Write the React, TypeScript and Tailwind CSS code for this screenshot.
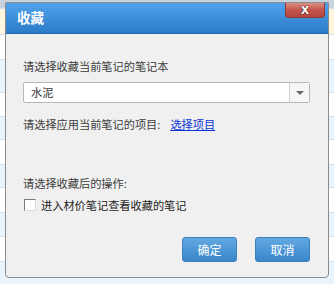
import React from "react";

const rows = [
  { h: 9, bg: "bg-[#c9d3de]" },
  { h: 26, bg: "bg-[#fdf6dc]" },
  { h: 25, bg: "bg-white" },
  { h: 33, bg: "bg-[#eaf4fc]" },
  { h: 24, bg: "bg-white" },
  { h: 23, bg: "bg-[#eaf4fc]" },
  { h: 25, bg: "bg-white" },
  { h: 23, bg: "bg-[#eaf4fc]" },
  { h: 25, bg: "bg-white" },
  { h: 24, bg: "bg-[#eaf4fc]" },
  { h: 25, bg: "bg-white" },
  { h: 30, bg: "bg-[#eaf4fc]" },
];

export default function App() {
  const font = { fontFamily: '"Noto Sans CJK SC", "Noto Sans", sans-serif' };
  return (
    <div className="relative w-[334px] h-[284px] overflow-hidden bg-white" style={font}>
      <div className="flex flex-col">
        {rows.map((r, i) => (
          <div
            key={i}
            className={`${r.bg} border-b border-[#d5e3ef]`}
            style={{ height: r.h }}
          />
        ))}
      </div>

      <div className="absolute left-[5px] top-[2px] w-[324px] h-[276px] border border-[#8c8c8c] rounded-b-[4px] bg-[#f0f0f0] flex flex-col overflow-hidden">
        <div className="relative h-[31px] shrink-0 flex items-center pl-[11px] bg-gradient-to-b from-[#50a3ec] to-[#2b7bc6] border-b border-[#1f68ad]">
          <span className="text-white font-bold text-[13.5px] leading-none">收藏</span>
          <div className="absolute right-[3px] top-[-1px] w-[40px] h-[16px] rounded-b-[3px] border border-[#8d3b33] bg-gradient-to-b from-[#dc9087] via-[#c3554d] to-[#b5463f] flex items-center justify-center">
            <span
              className="text-white font-bold text-[11px] leading-none"
              style={{ fontFamily: '"DejaVu Sans", sans-serif', textShadow: "0 0 1px #4a1612, 0 0 1px #4a1612, 0 0 1px #4a1612" }}
            >
              X
            </span>
          </div>
        </div>

        <div className="flex flex-col pl-[17px] pr-[18px] pt-[24px] text-[11.2px] text-[#3c3c3c]">
          <div className="h-[16px] leading-[16px]">请选择收藏当前笔记的笔记本</div>
          <div className="mt-[8px] h-[21px] flex bg-white border border-[#b8b8b8] rounded-[2px]">
            <div className="flex-1 pl-[7px] flex items-center text-[#333]">水泥</div>
            <div className="w-[20px] border-l border-[#cfcfcf] bg-[#f6f6f6] flex items-center justify-center">
              <div className="w-0 h-0 border-l-[4px] border-r-[4px] border-t-[4px] border-l-transparent border-r-transparent border-t-[#666]" />
            </div>
          </div>
          <div className="mt-[13px] h-[16px] leading-[16px] flex">
            <span>请选择应用当前笔记的项目:</span>
            <span className="ml-[10px] text-[#0a33d8] underline">选择项目</span>
          </div>
          <div className="mt-[43px] h-[16px] leading-[16px]">请选择收藏后的操作:</div>
          <div className="mt-[6px] h-[16px] flex items-center">
            <div className="ml-[1px] w-[12px] h-[12px] bg-white border border-t-[#7a7a7a] border-l-[#7a7a7a] border-b-[#dcdcdc] border-r-[#dcdcdc]" />
            <span className="ml-[5px] leading-[16px] text-[#222]">进入材价笔记查看收藏的笔记</span>
          </div>
          <div className="mt-[24px] flex justify-end gap-[18px]">
            <div className="w-[55px] h-[25px] rounded-[3px] border border-[#3b7fbf] bg-gradient-to-b from-[#62a8e0] to-[#3886cb] flex items-center justify-center text-white text-[12px]">
              确定
            </div>
            <div className="w-[55px] h-[25px] rounded-[3px] border border-[#3b7fbf] bg-gradient-to-b from-[#62a8e0] to-[#3886cb] flex items-center justify-center text-white text-[12px]">
              取消
            </div>
          </div>
        </div>
      </div>
    </div>
  );
}
